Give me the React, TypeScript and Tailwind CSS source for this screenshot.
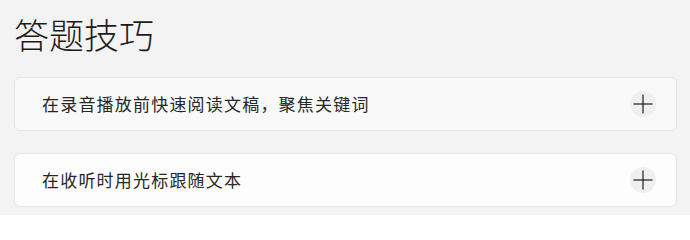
const tips = [
  { text: "在录音播放前快速阅读文稿，聚焦关键词", hovered: true },
  { text: "在收听时用光标跟随文本", hovered: false },
];

function PlusIcon() {
  return (
    <svg width="20" height="20" viewBox="0 0 20 20" fill="none" stroke="#1b1b1b" strokeWidth="1.2">
      <line x1="0.5" y1="10" x2="19.5" y2="10" />
      <line x1="10" y1="0.5" x2="10" y2="19.5" />
    </svg>
  );
}

export default function App() {
  return (
    <div
      className="h-[215px] w-[690px] overflow-hidden bg-[#f3f3f3] pl-[14px] pr-[13px] pt-[16px]"
      style={{ fontFamily: '"Noto Sans CJK SC", "Noto Sans", sans-serif' }}
    >
      <h1 className="text-[35px] font-light leading-[36px] text-[#1b1b1b]">答题技巧</h1>
      <div className="mt-[25px] flex flex-col gap-[22px]">
        {tips.map((t) => (
          <div
            key={t.text}
            className={`flex h-[54px] items-center justify-between rounded-[6px] border border-[#e5e5e5] pl-[27px] pr-[20px] ${
              t.hovered ? "bg-[#f9f9f9]" : "bg-[#fdfdfd]"
            }`}
          >
            <span className="text-[17px] tracking-[1.2px] text-[#262626]">{t.text}</span>
            <span className="flex h-[26px] w-[26px] items-center justify-center rounded-full bg-[#efefef]">
              <PlusIcon />
            </span>
          </div>
        ))}
      </div>
    </div>
  );
}
